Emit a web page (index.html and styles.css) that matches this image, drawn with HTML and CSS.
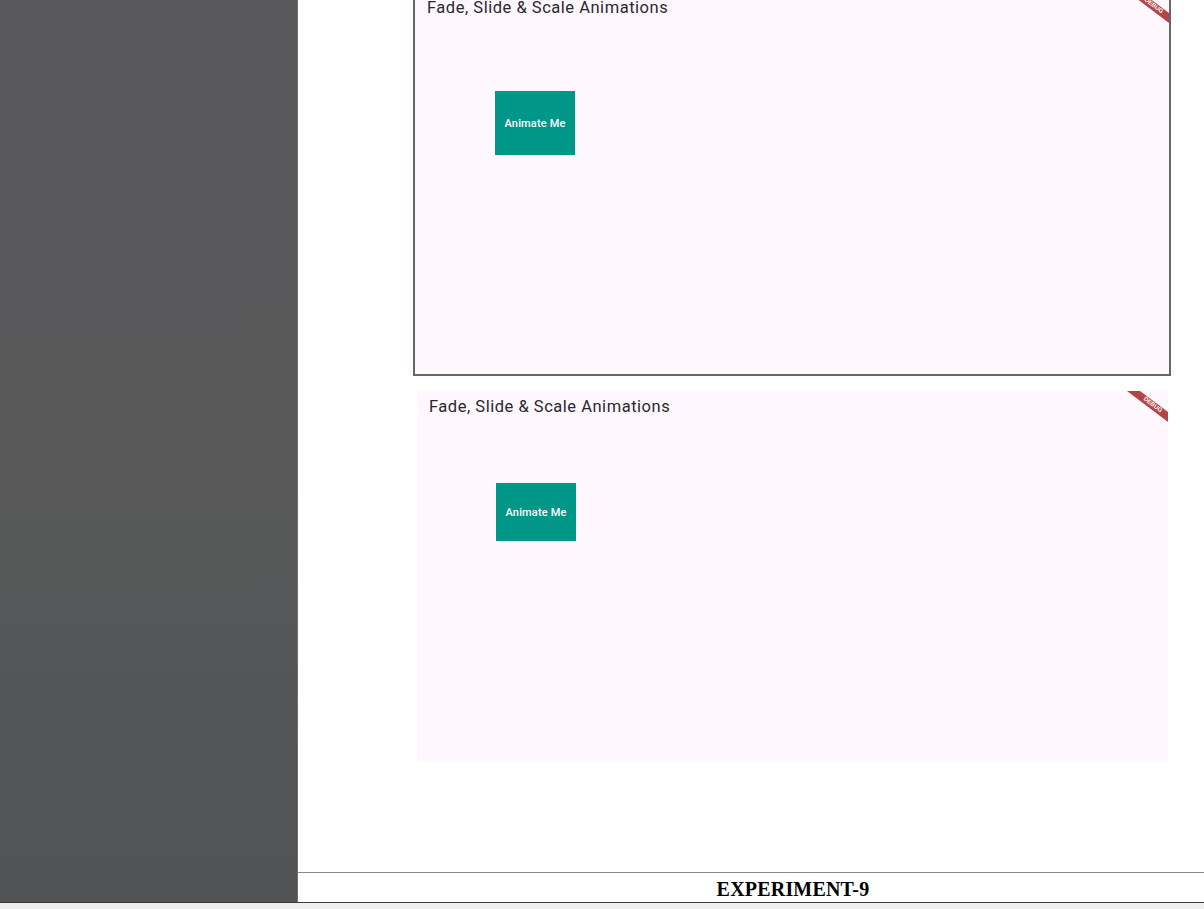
FILE: index.html
```html
<!DOCTYPE html>
<html lang="en">
<head>
<meta charset="utf-8">
<title>Experiment 9</title>
<link rel="stylesheet" href="styles.css">
</head>
<body>
<div class="page">
  <aside class="panel"></aside>
  <main class="content">
    <section class="shot shot-framed">
      <h2 class="shot-title">Fade, Slide &amp; Scale Animations</h2>
      <div class="anim-box anim-box-a">Animate Me</div>
      <svg class="debug" width="44" height="34" viewBox="-44 0 44 34" aria-hidden="true">
        <polygon points="-28,0 -41,0 0,31 0,21" fill="#b24646"/>
        <text x="-15" y="13.5" transform="rotate(37 -15 13.5)" text-anchor="middle" dominant-baseline="central" class="debug-text">DEBUG</text>
      </svg>
    </section>
    <section class="shot shot-plain">
      <h2 class="shot-title">Fade, Slide &amp; Scale Animations</h2>
      <div class="anim-box anim-box-b">Animate Me</div>
      <svg class="debug" width="44" height="34" viewBox="-44 0 44 34" aria-hidden="true">
        <polygon points="-28,0 -41,0 0,31 0,21" fill="#b24646"/>
        <text x="-15" y="13.5" transform="rotate(37 -15 13.5)" text-anchor="middle" dominant-baseline="central" class="debug-text">DEBUG</text>
      </svg>
    </section>
    <footer class="doc-footer">
      <p class="doc-heading">EXPERIMENT-9</p>
    </footer>
  </main>
</div>
<div class="bottom-strip"></div>
</body>
</html>
```

FILE: styles.css
```css
html, body {
  margin: 0;
  padding: 0;
  background: #ffffff;
  overflow: hidden;
}

.page {
  display: flex;
  height: 902px;
  border-bottom: 1px solid #3c3c3c;
  overflow: hidden;
}

.panel {
  width: 297px;
  flex: 0 0 297px;
  background: linear-gradient(180deg, #59595b 0%, #59595a 45%, #575858 62%, #525456 80%, #515355 100%);
  border-right: 1px solid #6f7070;
}

.content {
  flex: 1;
  display: flex;
  flex-direction: column;
  min-width: 0;
  background: #ffffff;
}

.shot {
  position: relative;
  flex-shrink: 0;
  background: #fef7fe;
  overflow: hidden;
  box-sizing: border-box;
  font-family: Roboto, "Noto Sans", sans-serif;
}

.shot-framed {
  margin-top: -10px;
  margin-left: 115px;
  width: 758px;
  height: 386px;
  border: 2px solid #666666;
}

.shot-plain {
  margin-top: 15px;
  margin-left: 119px;
  width: 751px;
  height: 370px;
}

.shot-title {
  margin: 0;
  padding: 8px 0 0 12px;
  font-size: 16.5px;
  line-height: 16px;
  font-weight: 400;
  letter-spacing: 0.52px;
  color: #2a282d;
}

.anim-box {
  display: flex;
  align-items: center;
  justify-content: center;
  width: 80px;
  background: #009688;
  color: #ffffff;
  font-size: 11px;
  font-weight: 500;
  letter-spacing: 0.15px;
}

.anim-box-a {
  margin-top: 75px;
  margin-left: 80px;
  height: 64px;
}

.anim-box-b {
  margin-top: 68px;
  margin-left: 79px;
  height: 58px;
}

.debug {
  position: absolute;
  top: 0;
  right: 0;
  display: block;
}

.debug-text {
  font-family: "Liberation Sans", Arial, sans-serif;
  font-size: 6px;
  font-weight: 700;
  fill: #ffffff;
}

.doc-footer {
  flex-shrink: 0;
  margin-top: 111px;
  border-top: 1px solid #8a8a8a;
}

.doc-heading {
  margin: 0;
  padding: 4px 0 0 84px;
  text-align: center;
  font-family: "Liberation Serif", "Times New Roman", serif;
  font-weight: 700;
  font-size: 20px;
  line-height: 25px;
  color: #000000;
  letter-spacing: 0.2px;
}

.bottom-strip {
  height: 7px;
  background: #efefef;
}
```
